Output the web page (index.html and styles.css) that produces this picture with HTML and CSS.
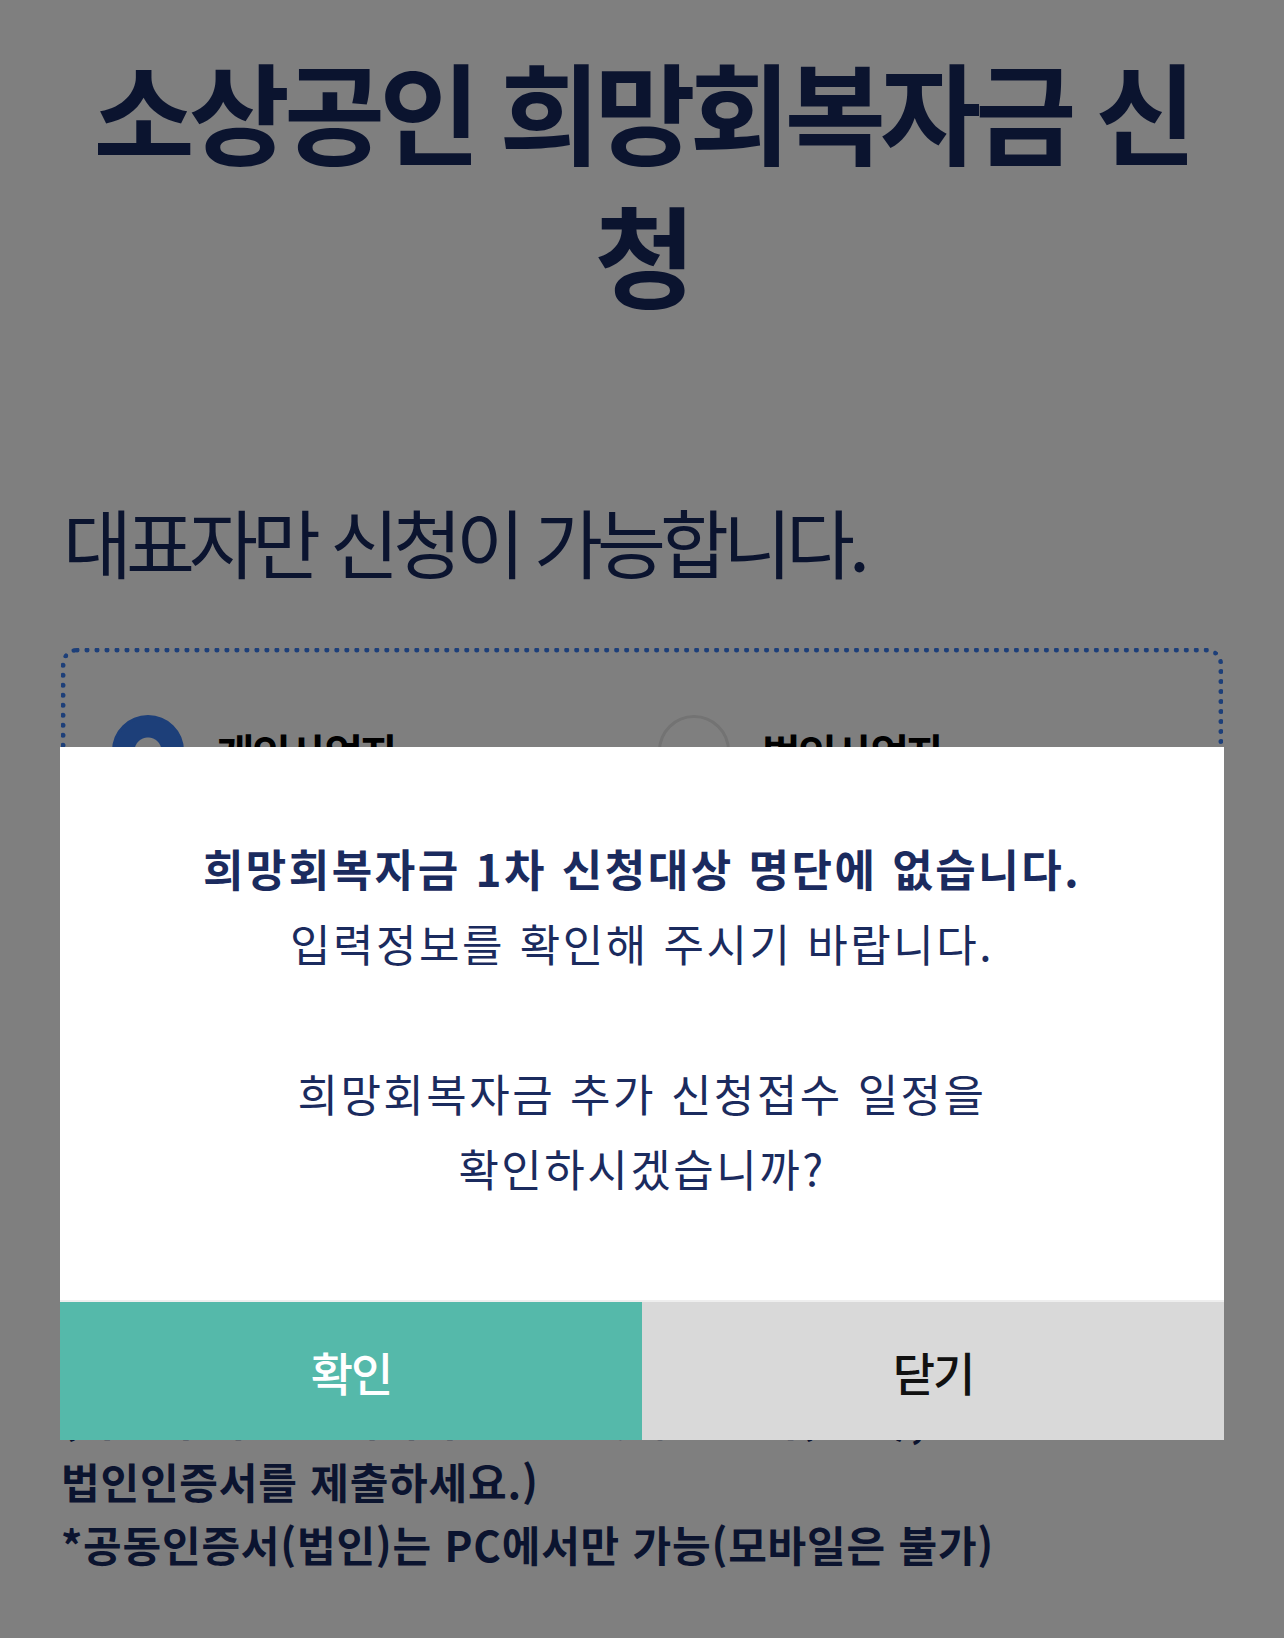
FILE: index.html
```html
<!DOCTYPE html>
<html lang="ko">
<head>
<meta charset="utf-8">
<title>소상공인 희망회복자금 신청</title>
<link rel="stylesheet" href="styles.css">
</head>
<body>
<main class="page">
  <h1 class="title">소상공인 희망회복자금 신청</h1>
  <p class="subtitle">대표자만 신청이 가능합니다.</p>
  <div class="type-box">
    <label class="radio-item">
      <span class="radio radio-on"></span>
      <span class="radio-label">개인사업자</span>
    </label>
    <label class="radio-item">
      <span class="radio"></span>
      <span class="radio-label">법인사업자</span>
    </label>
  </div>
  <div class="notice">
    <p class="notice-line">*법인사업자는 대표자 본인인증 후</p>
    <p class="notice-line">(사업자 확인 단계에서 반드시 공동인증서(법인),</p>
    <p class="notice-line">법인인증서를 제출하세요.)</p>
    <p class="notice-line">*공동인증서(법인)는 PC에서만 가능(모바일은 불가)</p>
  </div>
</main>
<div class="overlay"></div>
<div class="modal" role="dialog">
  <div class="modal-body">
    <p class="modal-text"><strong class="modal-strong">희망회복자금 1차 신청대상 명단에 없습니다.</strong><br>입력정보를 확인해 주시기 바랍니다.<br><br>희망회복자금 추가 신청접수 일정을<br>확인하시겠습니까?</p>
  </div>
  <div class="modal-actions">
    <button class="btn btn-ok" type="button">확인</button>
    <button class="btn btn-close" type="button">닫기</button>
  </div>
</div>
</body>
</html>
```

FILE: styles.css
```css
html, body {
  margin: 0;
  padding: 0;
}
body {
  background: #ffffff;
  font-family: "Noto Sans CJK KR", "Noto Sans", sans-serif;
  color: #16285f;
}
.page {
  padding: 38px 61px 0;
}
.title {
  margin: 0;
  text-align: center;
  font-size: 110px;
  font-weight: 700;
  line-height: 143px;
  letter-spacing: -6px;
  color: #16285f;
}
.subtitle {
  margin: 172px 0 0 2px;
  font-size: 75px;
  font-weight: 400;
  line-height: 90px;
  letter-spacing: -6px;
  color: #16285f;
}
.type-box {
  margin-top: 62px;
  border: 5px dotted #3a7ef2;
  border-radius: 16px;
  padding: 62px 40px 60px 46px;
  display: grid;
  grid-template-columns: 546px 1fr;
}
.radio-item {
  display: flex;
  align-items: center;
  gap: 32px;
}
.radio {
  width: 66px;
  height: 66px;
  border-radius: 50%;
  border: 3px solid #e6e6e6;
  background: #ffffff;
  box-sizing: content-box;
}
.radio-on {
  border: 3px solid #3a7ef2;
  background: radial-gradient(circle, #ffffff 0 13px, #3a7ef2 14px);
}
.radio-label {
  font-size: 42px;
  font-weight: 700;
  letter-spacing: -2.5px;
  color: #000000;
}
.notice {
  margin-top: 471px;
}
.notice-line {
  margin: 0;
  font-size: 42px;
  font-weight: 700;
  line-height: 63px;
  letter-spacing: 0.8px;
  color: #16285f;
}
.overlay {
  position: fixed;
  inset: 0;
  background: rgba(0, 0, 0, 0.5);
}
.modal {
  position: fixed;
  left: 60px;
  top: 747px;
  width: 1164px;
  background: #ffffff;
  display: flex;
  flex-direction: column;
}
.modal-body {
  padding: 84px 10px 94px;
}
.modal-text {
  margin: 0;
  text-align: center;
  font-size: 44px;
  line-height: 75px;
  font-weight: 400;
  letter-spacing: 2.5px;
  color: #1b2b5e;
}
.modal-strong {
  font-weight: 700;
}
.modal-actions {
  display: grid;
  grid-template-columns: 1fr 1fr;
  border-top: 2px solid #eeeeee;
}
.btn {
  height: 138px;
  border: 0;
  margin: 0;
  font-family: inherit;
  font-size: 46px;
  font-weight: 500;
  letter-spacing: -2px;
}
.btn-ok {
  background: #55b9aa;
  color: #ffffff;
}
.btn-close {
  background: #d9d9d9;
  color: #111111;
}
```
